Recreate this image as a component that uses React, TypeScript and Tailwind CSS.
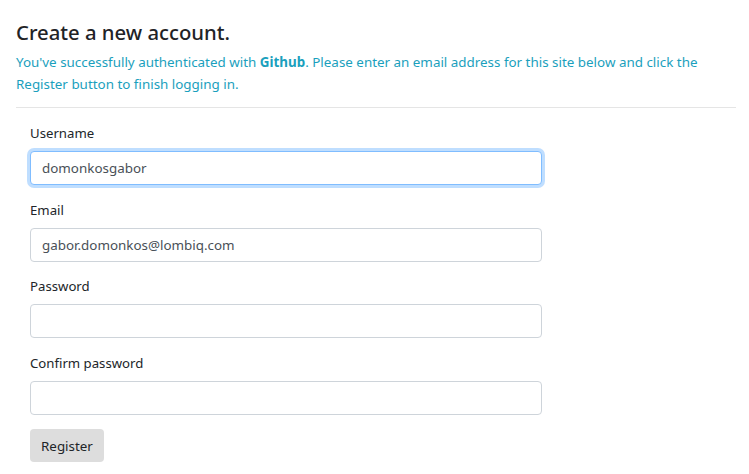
import React, { useState } from 'react';

const font = { fontFamily: '"Segoe UI", "Noto Sans", "Open Sans", sans-serif' };

interface FieldProps {
  label: string;
  type?: string;
  value: string;
  focused?: boolean;
  onChange: (v: string) => void;
}

const Field: React.FC<FieldProps> = ({ label, type = 'text', value, focused, onChange }) => (
  <div className="flex flex-col">
    <label className="text-[13.2px] leading-[20px] text-[#212529] mb-[8px]">{label}</label>
    <input
      type={type}
      value={value}
      onChange={e => onChange(e.target.value)}
      className={
        'h-[34px] w-[512px] rounded-[4px] border bg-white px-[11px] text-[13.4px] text-[#495057] outline-none ' +
        (focused
          ? 'border-[#80bdff] shadow-[0_0_0_3px_rgba(0,123,255,0.25)]'
          : 'border-[#ced4da]')
      }
    />
  </div>
);

export default function App() {
  const [user, setUser] = useState('domonkosgabor');
  const [email, setEmail] = useState('gabor.domonkos@lombiq.com');
  const [pass, setPass] = useState('');
  const [confirm, setConfirm] = useState('');

  return (
    <div className="min-h-screen bg-white px-[16px] pt-[16px]" style={font}>
      <h1 className="text-[20.3px] leading-[32px] font-medium text-[#1f2327]">Create a new account.</h1>
      <p className="mt-[3px] text-[13.4px] leading-[22px] text-[#1aa0bd] pr-[20px]">
        You've successfully authenticated with <strong className="font-bold">Github</strong>. Please enter an email
        address for this site below and click the Register button to finish logging in.
      </p>
      <hr className="mt-[12px] border-t border-[#e5e5e5] mr-[-3px]" />
      <form className="flex flex-col gap-[14.6px] px-[14px] pt-[15px]" onSubmit={e => e.preventDefault()}>
        <Field label="Username" value={user} focused onChange={setUser} />
        <Field label="Email" type="email" value={email} onChange={setEmail} />
        <Field label="Password" type="password" value={pass} onChange={setPass} />
        <Field label="Confirm password" type="password" value={confirm} onChange={setConfirm} />
        <div>
          <button
            type="submit"
            className="h-[33px] rounded-[4px] bg-[#dddddd] px-[11px] text-[13.4px] text-[#212529]"
          >
            Register
          </button>
        </div>
      </form>
    </div>
  );
}
